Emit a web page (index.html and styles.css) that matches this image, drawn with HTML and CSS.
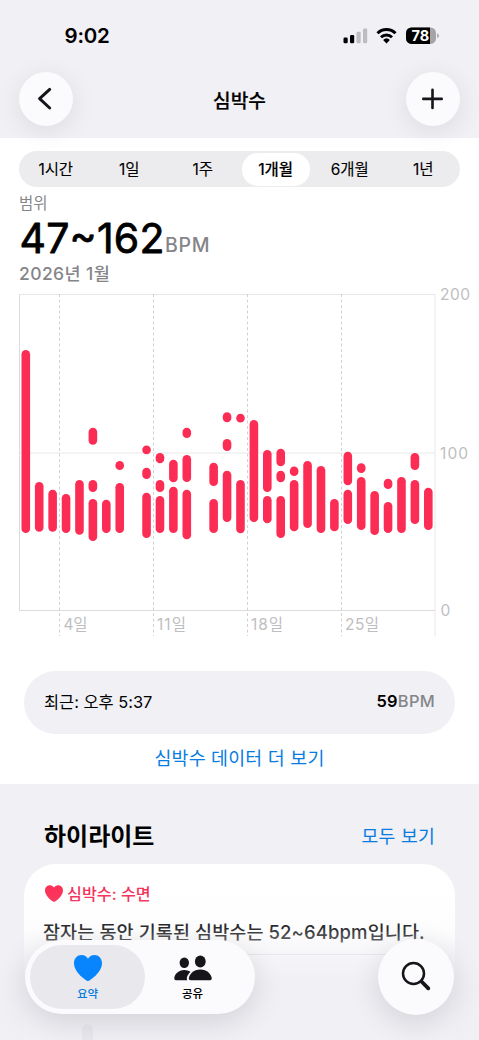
FILE: index.html
```html
<!DOCTYPE html>
<html lang="ko">
<head>
<meta charset="utf-8">
<title>심박수</title>
<link rel="stylesheet" href="styles.css">
</head>
<body>
<div class="phone">
  <header class="header">
    <div class="status">
      <span class="time">9:02</span>
      <svg class="status-icons" width="98" height="20" viewBox="0 0 98 20">
        <rect x="0.5" y="11.5" width="4.2" height="5.8" rx="1.2"/>
        <rect x="7" y="9" width="4.2" height="8.3" rx="1.2"/>
        <rect class="dim" x="13.5" y="5.8" width="4.2" height="11.5" rx="1.2"/>
        <rect class="dim" x="20" y="2.4" width="4.2" height="14.9" rx="1.2"/>
        <path class="wave" d="M34.500 7.300a12.600 12.600 0 0 1 18 0M38 11.300a7.800 7.800 0 0 1 11 0"/>
        <path d="M43.500 17.600l3.400-3.700a5 5 0 0 0-6.800 0z"/>
        <rect class="cell-rest" x="63" y="1.5" width="30" height="16.4" rx="5.4"/>
        <path d="M68.4 1.5H87v16.4H68.4a5.4 5.4 0 0 1-5.4-5.4V6.9a5.4 5.4 0 0 1 5.4-5.4z"/>
        <path class="cell-rest" d="M94.2 7.4q1.8.4 1.8 2.3t-1.8 2.3z"/>
        <text class="cell-text" x="77.4" y="14.9" text-anchor="middle">78</text>
      </svg>
    </div>
    <div class="nav">
      <button class="round-btn" aria-label="뒤로"><svg class="back" width="54" height="54" viewBox="0 0 54 54"><path d="M30.700 17.400L20.600 26.700L30.700 36"/></svg></button>
      <h1 class="title">심박수</h1>
      <button class="round-btn" aria-label="추가"><svg width="54" height="54" viewBox="0 0 54 54"><path d="M26.500 17.700V36M17.300 26.900H35.700"/></svg></button>
    </div>
  </header>

  <main class="panel">
    <div class="segments">
      <span class="seg">1시간</span><span class="seg">1일</span><span class="seg">1주</span><span class="seg active">1개월</span><span class="seg">6개월</span><span class="seg">1년</span>
    </div>
    <section class="summary">
      <div class="range-label">범위</div>
      <svg class="range" width="220" height="40" viewBox="0 0 220 40">
        <text class="range-value" x="0.5" y="38.500" textLength="145">47~162</text>
        <text class="range-unit" x="146" y="38" textLength="44.500">BPM</text>
      </svg>
      <div class="period">2026년 1월</div>
    </section>
    <svg class="chart" width="479" height="360" viewBox="0 285 479 360">
      <path class="grid" d="M19 294.5H435M19 453H435M435 294V636"/>
      <path class="axis" d="M19.5 294V610.5H435"/>
      <path class="week" d="M59.5 294V636M153.5 294V636M247.5 294V636M341.5 294V636"/>
      <g id="bars" class="bars"></g>
      <g class="labels">
        <text x="440" y="300" textLength="30">200</text>
        <text x="440" y="458.5" textLength="28">100</text>
        <text x="440.5" y="616">0</text>
        <text x="63.5" y="629.5" textLength="24">4일</text>
        <text x="157" y="629.5" textLength="29">11일</text>
        <text x="251" y="629.5" textLength="32">18일</text>
        <text x="345" y="629.5" textLength="34">25일</text>
      </g>
    </svg>
    <div class="latest">
      <span class="latest-time">최근: 오후 5:37</span>
      <span class="latest-value"><b>59</b>BPM</span>
    </div>
    <a class="more">심박수 데이터 더 보기</a>
  </main>

  <section class="highlights">
    <div class="highlights-head">
      <h2>하이라이트</h2>
      <a class="all">모두 보기</a>
    </div>
    <article class="card">
      <div class="card-kind">
        <svg width="18" height="17" viewBox="0 0 28 26"><path d="M14 26C12.500 26 0 17.500 0 8.200C0 3.300 3.400 0 7.600 0C10.500 0 12.700 1.500 14 3.800C15.300 1.500 17.500 0 20.400 0C24.600 0 28 3.300 28 8.200C28 17.500 15.500 26 14 26Z"/></svg>
        <span>심박수: 수면</span>
      </div>
      <p class="card-text">잠자는 동안 기록된 심박수는 52~64bpm입니다.</p>
      <hr class="rule">
      <i class="ghost-bar"></i>
    </article>
  </section>

  <div class="fade"></div>
  <nav class="dock">
    <div class="tabs">
      <div class="tab selected">
        <svg width="28" height="26" viewBox="0 0 28 26"><path d="M14 26C12.500 26 0 17.500 0 8.200C0 3.300 3.400 0 7.600 0C10.500 0 12.700 1.500 14 3.800C15.300 1.500 17.500 0 20.400 0C24.600 0 28 3.300 28 8.200C28 17.500 15.500 26 14 26Z"/></svg>
        <span>요약</span>
      </div>
      <div class="tab">
        <svg width="38" height="26" viewBox="0 0 38 26">
          <ellipse cx="10.300" cy="7.700" rx="4.700" ry="5.300"/>
          <path d="M2.500 25.300Q.3 25.300.3 23.400C.3 19.500 4.500 15 10.300 15Q13.800 15 16.500 16.700C14.200 18.800 12.800 21.400 12.800 23.600Q12.800 24.600 13.300 25.300Z"/>
          <ellipse cx="26.300" cy="6.500" rx="5.400" ry="6"/>
          <path d="M17 25.300Q14.900 25.300 14.900 23.400C14.900 19.600 19.600 14.500 26.300 14.500S37.700 19.600 37.700 23.400Q37.700 25.300 35.600 25.300Z"/>
        </svg>
        <span>공유</span>
      </div>
    </div>
    <button class="search" aria-label="검색"><svg width="76" height="76" viewBox="0 0 76 76"><circle cx="35.500" cy="34.500" r="10.500"/><path class="handle" d="M43.500 42.500L50.300 49.300"/></svg></button>
  </nav>
</div>
<script src="chart.js"></script>
</body>
</html>
```
FILE: styles.css
```css
* { box-sizing: border-box; }
body {
  margin: 0;
  background: #f0f0f5;
  color: #000;
  font-family: Inter, "Noto Sans CJK KR", sans-serif;
}
.phone { position: relative; width: 479px; height: 1040px; overflow: hidden; background: #f0f0f5; }

/* Header */
.header { position: relative; z-index: 1; height: 138px; }
.status { display: flex; justify-content: space-between; align-items: flex-start; height: 72px; padding: 26px 38px 0 64.5px; }
.time { font-size: 20.5px; font-weight: 600; line-height: 20px; letter-spacing: -0.2px; }
.dim { fill: #bdbdc1; }
.wave { fill: none; stroke: #000; stroke-width: 2.9; }
.cell-rest { fill: #a5a5a8; }
.cell-text { fill: #fff; font-size: 14.5px; font-weight: 700; }
.nav { display: flex; justify-content: space-between; align-items: center; padding: 0 19px; }
.title { margin: 0; padding-top: 3px; font-size: 19.2px; font-weight: 500; line-height: 28px; -webkit-text-stroke: .2px #000; }
.round-btn { width: 54px; height: 54px; padding: 0; border: 0; border-radius: 50%; background: #fbfbfe; box-shadow: 0 5px 26px rgba(0, 0, 20, .09); }
.round-btn svg { display: block; fill: none; stroke: #15151a; stroke-width: 2.6; stroke-linecap: round; stroke-linejoin: round; }
.round-btn .back { stroke-width: 3; }

/* Measurement panel */
.panel { height: 646px; padding-top: 13px; background: #fff; }
.segments { display: grid; grid-template-columns: repeat(6, 1fr); width: 441px; height: 36px; margin: 0 19px; padding: 2px 0; border-radius: 18px; background: #ececef; }
.seg { padding-top: 1px; font-size: 15.5px; font-weight: 400; line-height: 32px; text-align: center; letter-spacing: -0.1px; -webkit-text-stroke: .1px #000; }
.seg.active { margin: 0 3.5px 0 2px; border-radius: 16px; background: #fff; font-weight: 500; }
.summary { padding: 4px 19px 0; }
.range-label { height: 24px; padding-top: 1px; color: #858589; font-size: 15.5px; font-weight: 400; line-height: 24px; }
.range { display: block; margin-top: -1px; overflow: visible; }
.range-value { font-size: 41px; font-weight: 400; stroke: #000; stroke-width: .8; stroke-linejoin: round; }
.range-unit { font-size: 19.5px; font-weight: 500; fill: #858589; }
.period { margin-top: 7px; color: #858589; font-size: 17.5px; font-weight: 500; line-height: 26px; letter-spacing: .4px; }
.chart { display: block; margin-top: -2px; }
.grid { fill: none; stroke: #e8e8ea; }
.axis { fill: none; stroke: #dcdcde; }
.week { fill: none; stroke: #d2d2d4; stroke-dasharray: 3 2.5; }
.bars { stroke: #fc2d55; stroke-width: 8.6; stroke-linecap: round; }
.labels { fill: #bebec1; font-size: 15.5px; font-weight: 400; }
.latest { display: flex; justify-content: space-between; align-items: center; height: 63px; margin: 26px 24px 0; padding: 0 20px 3px; border-radius: 32px; background: #f0f0f5; font-size: 16.4px; }
.latest-value { color: #858589; font-weight: 500; letter-spacing: .3px; }
.latest-value b { color: #000; font-weight: 600; }
.more { display: block; margin-top: 10px; color: #087ce0; font-size: 18.4px; line-height: 28px; text-align: center; letter-spacing: .2px; }

/* Highlights */
.highlights { padding: 36px 24px 0; }
.highlights-head { display: flex; justify-content: space-between; align-items: center; height: 30px; padding: 0 20px; }
.highlights-head h2 { margin: 0; padding-top: 4px; font-size: 24px; font-weight: 700; line-height: 30px; }
.all { color: #087ce0; font-size: 18.3px; letter-spacing: .2px; }
.card { height: 210px; margin-top: 14px; padding: 17px 19px 0; border-radius: 32px; background: #fff; }
.card-kind { display: flex; align-items: center; gap: 4px; height: 24px; padding-left: 2px; color: #f42e57; font-size: 16.2px; font-weight: 500; }
.card-kind svg { fill: #fc2d55; }
.card-text { margin: 13px 0 0; font-size: 18.5px; font-weight: 500; line-height: 28px; white-space: nowrap; letter-spacing: .1px; }
.rule { height: 1px; margin: 8px 0 0; border: 0; background: #d8d8dc; }
.ghost-bar { display: block; width: 11px; height: 40px; margin: 69px 0 0 39px; border-radius: 6px; background: #a8a8b4; }

/* Floating tab bar */
.fade { position: absolute; left: 0; right: 0; bottom: 0; height: 160px; background: linear-gradient(rgba(240, 240, 245, 0), rgba(240, 240, 245, .12) 30%, rgba(240, 240, 245, .7) 50%, rgba(239, 239, 244, .95) 66%, rgba(239, 239, 244, .9)); }
.card-text { color: #111114; }
.dock { position: absolute; left: 25px; right: 25px; top: 939px; display: flex; justify-content: space-between; align-items: center; height: 76px; }
.tabs { display: flex; width: 230px; height: 74px; padding: 5px; border-radius: 37px; background: #fbfbfe; box-shadow: 0 8px 30px rgba(0, 0, 20, .13); }
.tab { display: flex; flex-direction: column; align-items: center; width: 115px; height: 64px; padding-top: 10px; border-radius: 33px; }
.tab + .tab { width: 97px; margin-left: -1px; }
.tab svg { display: block; fill: #15151a; }
.tab span { margin-top: 4px; font-size: 11.5px; font-weight: 500; line-height: 18px; }
.tab.selected { background: #e8e8ed; color: #087ce0; }
.selected svg { fill: #0885fc; }
.search { width: 76px; height: 76px; padding: 0; border: 0; border-radius: 50%; background: #fbfbfe; box-shadow: 0 8px 30px rgba(0, 0, 20, .13); }
.search svg { display: block; fill: none; stroke: #15151a; stroke-width: 2.5; stroke-linecap: round; }
.search .handle { stroke-width: 3.8; }
```
FILE: chart.js
```js
// Vertical extents [top, bottom] of each heart-rate range, one entry per day.
const days = [
  [[350, 533]], [[482, 531.7]], [[489.7, 531.7]], [[494, 533]], [[480, 534.7]],
  [[427.7, 444.7], [480, 492], [499, 541]], [[499.7, 533]], [[461, 470], [483, 533]], [],
  [[445.4, 454.2], [467.7, 479], [492.7, 538]],
  [[453, 463.3], [480, 492], [496, 533]],
  [[459.7, 482.3], [486.7, 533]],
  [[427.7, 438], [455, 482], [489.7, 539.3]], [],
  [[462.7, 486], [499, 533]],
  [[412.3, 422.3], [439, 451], [470.7, 522]],
  [[413.7, 422.5], [480, 533.3]],
  [[420, 522]],
  [[450, 492], [496, 523.3]],
  [[448.7, 466.3], [470.7, 482.3], [496, 538]],
  [[466.5, 476], [480, 531.3]],
  [[461, 528]], [[466, 533]], [[499, 531.3]],
  [[451.7, 485.3], [489.7, 524]],
  [[463.3, 473], [477, 530]],
  [[491, 535]],
  [[478.7, 489], [502, 533]],
  [[477, 533]],
  [[453, 470], [480, 524]],
  [[487.7, 530]]
];
const group = document.getElementById("bars");
const cap = 4.3;
days.forEach((ranges, i) => {
  const x = 25.8 + i * 13.417;
  ranges.forEach(([top, bottom]) => {
    const path = document.createElementNS("http://www.w3.org/2000/svg", "path");
    path.setAttribute("d", `M${x} ${top + cap}V${Math.max(bottom - cap, top + cap + 0.1)}`);
    group.appendChild(path);
  });
});
```
